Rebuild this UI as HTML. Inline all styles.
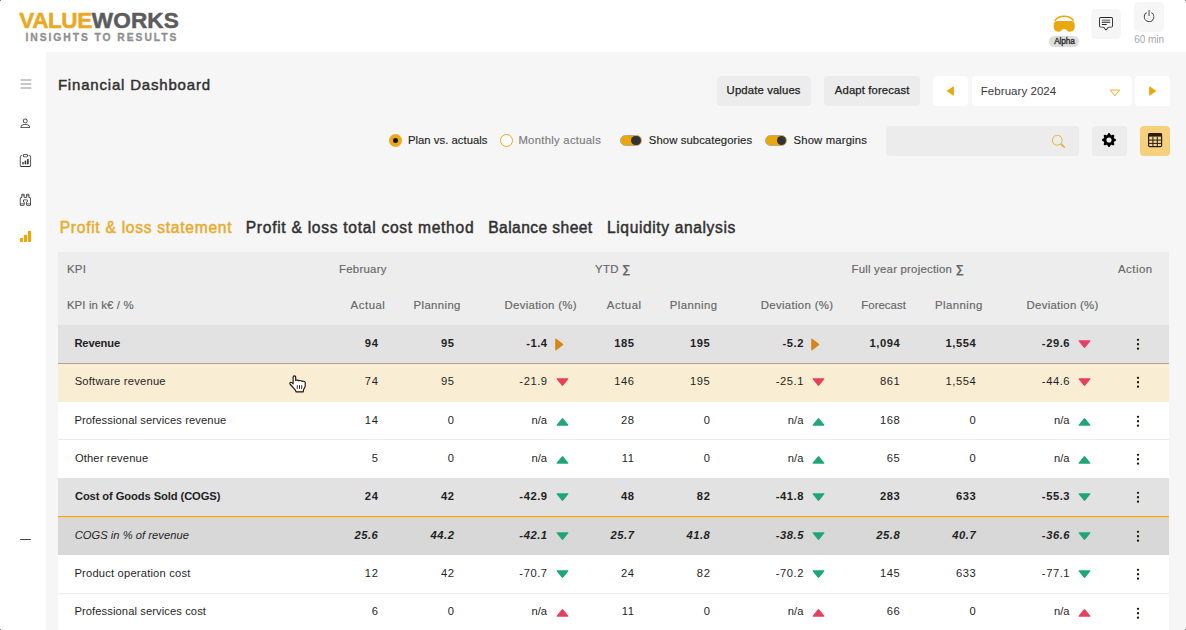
<!DOCTYPE html>
<html lang="en">
<head>
<meta charset="utf-8">
<title>Financial Dashboard</title>
<style>
*{box-sizing:border-box;margin:0;padding:0}
html,body{width:1186px;height:630px;overflow:hidden;background:#fff}
body{font-family:"Liberation Sans",sans-serif;color:#222;position:relative}
#app{position:absolute;left:0;top:0;width:1186px;height:630px;overflow:hidden;background:#fff}
#main{position:absolute;left:46px;top:52px;width:1140px;height:578px;background:#f6f6f6}
.abs{position:absolute;white-space:nowrap}
.ic{position:absolute;display:block;overflow:visible}
.row{position:absolute;left:58px;width:1111px}
.sep{position:absolute;left:58px;width:1111px;height:1px;background:#ebebeb}
.lb,.v,.h{position:absolute;white-space:nowrap;font-size:11.2px;line-height:20px;height:20px;color:#1f1f1f}
.v{letter-spacing:.55px}
.b{font-weight:700}
.it{font-style:italic}
.h{color:#666;font-size:11.4px;-webkit-text-stroke:.15px}
.bt{font-size:11.3px;line-height:20px;color:#222;-webkit-text-stroke:.25px #222}
.btn{position:absolute;border-radius:4px;background:#ececec;font-size:11.5px;color:#222;text-align:center;white-space:nowrap}
.ctl{font-size:11.3px;line-height:20px;color:#1f1f1f;-webkit-text-stroke:.15px}
.tog{width:21.4px;height:11.8px;border-radius:6px;background:#eaa60f;border:1px solid #b9a98a}
.tog i{position:absolute;right:-.3px;top:.1px;width:9.400px;height:9.400px;border-radius:50%;background:#333}
#logo1{letter-spacing:0.24px;transform:translateX(0.3px)}
#logo2{letter-spacing:1.95px;transform:translateX(-0.5px)}
#title{letter-spacing:0.81px;transform:translateX(-0.1px)}
#t1{letter-spacing:0.72px;transform:translateX(-0.3px)}
#t2{letter-spacing:0.72px;transform:translateX(-0.3px)}
#t3{letter-spacing:0.42px;transform:translateX(0.3px)}
#t4{letter-spacing:0.61px;transform:translateX(0.0px)}
#b1{letter-spacing:0.14px;transform:translateX(-0.4px)}
#b2{letter-spacing:0.13px;transform:translateX(0.3px)}
#date{letter-spacing:0.05px;transform:translateX(-0.2px)}
#c1{letter-spacing:0.03px;transform:translateX(-0.6px)}
#c2{letter-spacing:0.28px;transform:translateX(-0.9px)}
#c3{letter-spacing:0.09px;transform:translateX(-0.2px)}
#c4{letter-spacing:0.16px;transform:translateX(-0.5px)}
#alpha{letter-spacing:-0.13px;transform:translateX(0.5px)}
#min{letter-spacing:-0.02px;transform:translateX(0.1px)}
#h0{letter-spacing:0.33px;transform:translateX(-1.1px)}
#h1{letter-spacing:0.12px;transform:translateX(-1.1px)}
#h2{letter-spacing:0.26px;transform:translateX(-0.5px)}
#h3{letter-spacing:0.26px;transform:translateX(0.1px)}
#h4{letter-spacing:0.22px;transform:translateX(-0.5px)}
#h5{letter-spacing:0.49px;transform:translateX(0.0px)}
#h6{letter-spacing:0.52px;transform:translateX(1.4px)}
#h7{letter-spacing:0.36px;transform:translateX(0.8px)}
#h8{letter-spacing:0.30px;transform:translateX(0.8px)}
#h9{letter-spacing:0.54px;transform:translateX(0.7px)}
#h10{letter-spacing:0.43px;transform:translateX(1.6px)}
#h11{letter-spacing:0.33px;transform:translateX(1.4px)}
#h12{letter-spacing:0.04px;transform:translateX(-0.1px)}
#h13{letter-spacing:0.42px;transform:translateX(0.7px)}
#h14{letter-spacing:0.27px;transform:translateX(0.5px)}
#lb0{letter-spacing:-0.14px;transform:translateX(-0.6px)}
#lb1{letter-spacing:0.21px;transform:translateX(-0.3px)}
#lb2{letter-spacing:0.09px;transform:translateX(-0.6px)}
#lb3{letter-spacing:0.14px;transform:translateX(-0.1px)}
#lb4{letter-spacing:-0.10px;transform:translateX(-0.1px)}
#lb5{letter-spacing:0.02px;transform:translateX(-0.3px)}
#lb6{letter-spacing:0.19px;transform:translateX(-0.6px)}
#lb7{letter-spacing:0.09px;transform:translateX(-0.6px)}
#lg1{letter-spacing:-.5px}
#lg2{letter-spacing:.14px}
</style>
</head>
<body>
<div id="app">
<div id="main"></div>

<!-- logo -->
<div class="abs" id="logo1" style="left:19px;top:8.8px;font-size:22.6px;line-height:24px;font-weight:700;-webkit-text-stroke:.5px"><span id="lg1" style="display:inline-block;color:#eaa91f">VALUE</span><span id="lg2" style="display:inline-block;color:#5c5c5c">WORKS</span></div>
<div class="abs" id="logo2" style="left:26px;top:31.8px;font-size:10.3px;line-height:12px;font-weight:700;-webkit-text-stroke:.3px;color:#8f8f8f">INSIGHTS TO RESULTS</div>

<!-- title -->
<div class="abs" id="title" style="left:58px;top:73.5px;font-size:15px;line-height:22px;font-weight:400;color:#303030;-webkit-text-stroke:.45px #303030">Financial Dashboard</div>

<!-- buttons -->
<div class="btn" style="left:717px;top:76px;width:94px;height:30px"></div>
<div class="btn" style="left:824px;top:76px;width:96.300px;height:30px"></div>
<div class="abs bt" id="b1" style="left:727px;top:79.700px">Update values</div>
<div class="abs bt" id="b2" style="left:834.500px;top:79.700px">Adapt forecast</div>
<div class="btn" style="left:933px;top:76px;width:35px;height:30px;background:#fff"></div>
<div class="btn" style="left:972px;top:76px;width:160px;height:30px;background:#fff"></div>
<div class="btn" style="left:1135px;top:76px;width:35px;height:30px;background:#fff"></div>
<div class="abs" id="date" style="left:981px;top:81px;font-size:11.5px;line-height:20px;color:#3a3a3a">February 2024</div>


<!-- controls row -->
<div class="abs" style="left:389px;top:134px;width:13.4px;height:13.4px;border-radius:50%;background:#eaa81c"></div>
<div class="abs" style="left:393px;top:138.400px;width:4.700px;height:4.700px;border-radius:50%;background:#1c1408"></div>
<div class="abs ctl" id="c1" style="left:408.5px;top:129.5px">Plan vs. actuals</div>
<div class="abs" style="left:499.8px;top:134px;width:13.4px;height:13.4px;border-radius:50%;background:#fff;border:1.2px solid #eaa81c"></div>
<div class="abs ctl" id="c2" style="left:519.3px;top:129.5px;color:#7b7b7b">Monthly actuals</div>
<div class="abs tog" style="left:620.2px;top:134.6px"><i></i></div>
<div class="abs ctl" id="c3" style="left:649px;top:129.5px">Show subcategories</div>
<div class="abs tog" style="left:765.4px;top:134.6px"><i></i></div>
<div class="abs ctl" id="c4" style="left:794px;top:129.5px">Show margins</div>
<div class="btn" style="left:886px;top:126px;width:193px;height:30px"></div>
<div class="btn" style="left:1092px;top:126px;width:35px;height:30px"></div>
<div class="btn" style="left:1140px;top:126px;width:30px;height:30px;background:#f6d07c"></div>

<!-- tabs -->
<div class="abs tab" id="t1" style="left:60px;top:216px;font-size:15.600px;line-height:24px;font-weight:400;color:#e8ab2a;-webkit-text-stroke:.45px #e8ab2a">Profit &amp; loss statement</div>
<div class="abs tab" id="t2" style="left:246px;top:216px;font-size:15.600px;line-height:24px;font-weight:400;color:#303030;-webkit-text-stroke:.45px #303030">Profit &amp; loss total cost method</div>
<div class="abs tab" id="t3" style="left:488px;top:216px;font-size:15.600px;line-height:24px;font-weight:400;color:#303030;-webkit-text-stroke:.45px #303030">Balance sheet</div>
<div class="abs tab" id="t4" style="left:607px;top:216px;font-size:15.600px;line-height:24px;font-weight:400;color:#303030;-webkit-text-stroke:.45px #303030">Liquidity analysis</div>

<!-- table header -->
<div class="row" style="top:252px;height:73.2px;background:#ededed"></div>
<div class="h" id="h0" style="left:68px;top:259px">KPI</div>
<div class="h" id="h1" style="left:68px;top:295px">KPI in k€ / %</div>
<div class="h" id="h2" style="left:339.5px;top:259px">February</div>
<div class="h" id="h3" style="left:595px;top:259px">YTD <b>∑</b></div>
<div class="h" id="h4" style="left:852px;top:259px">Full year projection <b>∑</b></div>
<div class="h" id="h5" style="left:1118px;top:259px">Action</div>
<div class="h" id="h6" style="right:802px;top:295px">Actual</div>
<div class="h" id="h7" style="right:726px;top:295px">Planning</div>
<div class="h" id="h8" style="right:610px;top:295px">Deviation (%)</div>
<div class="h" id="h9" style="right:545px;top:295px">Actual</div>
<div class="h" id="h10" style="right:470px;top:295px">Planning</div>
<div class="h" id="h11" style="right:354px;top:295px">Deviation (%)</div>
<div class="h" id="h12" style="right:280px;top:295px">Forecast</div>
<div class="h" id="h13" style="right:204px;top:295px">Planning</div>
<div class="h" id="h14" style="right:88px;top:295px">Deviation (%)</div>

<div class="row" style="top:325.0px;height:38.6px;background:#e2e2e2"></div>
<div class="lb b" id="lb0" style="left:75px;top:332.9px">Revenue</div>
<div class="v b" style="right:807.6px;top:332.9px">94</div>
<div class="v b" style="right:731.5px;top:332.9px">95</div>
<div class="v b" style="right:638.4px;top:332.9px">-1.4</div>
<div class="v b" style="right:551.5px;top:332.9px">185</div>
<div class="v b" style="right:475.6px;top:332.9px">195</div>
<div class="v b" style="right:382.0px;top:332.9px">-5.2</div>
<div class="v b" style="right:285.8px;top:332.9px">1,094</div>
<div class="v b" style="right:209.8px;top:332.9px">1,554</div>
<div class="v b" style="right:115.9px;top:332.9px">-29.6</div>
<svg class="ic" style="left:553.8px;top:337.7px" width="10" height="13" viewBox="0 0 10 13"><path d="M1.200 1.300v10.400a.7.700 0 0 0 1.100.6L8.800 7.200a.8.800 0 0 0 0-1.400L2.300 .7a.7.700 0 0 0-1.100.6z" fill="#d5871b"/></svg>
<svg class="ic" style="left:810.2px;top:337.7px" width="10" height="13" viewBox="0 0 10 13"><path d="M1.200 1.300v10.400a.7.700 0 0 0 1.100.6L8.800 7.200a.8.800 0 0 0 0-1.400L2.300 .7a.7.700 0 0 0-1.100.6z" fill="#d5871b"/></svg>
<svg class="ic" style="left:1077.9px;top:338.7px" width="13" height="10" viewBox="0 0 13 10"><path d="M1.300 1.200h10.400a.7.700 0 0 1 .6 1.100L7.200 8.600a.8.800 0 0 1-1.400 0L.7 2.300a.7.700 0 0 1 .6-1.100z" fill="#e83e60"/></svg>
<svg class="ic" style="left:1136px;top:338.0px" width="4" height="13" viewBox="0 0 4 13"><circle cx="2" cy="1.800" r="1.150" fill="#1c1408"/><circle cx="2" cy="6.250" r="1.150" fill="#1c1408"/><circle cx="2" cy="10.700" r="1.150" fill="#1c1408"/></svg>
<div class="row" style="top:363.4px;height:38.6px;background:#f9eed4"></div>
<div class="lb" id="lb1" style="left:75px;top:371.2px">Software revenue</div>
<div class="v" style="right:807.6px;top:371.2px">74</div>
<div class="v" style="right:731.5px;top:371.2px">95</div>
<div class="v" style="right:638.4px;top:371.2px">-21.9</div>
<div class="v" style="right:551.5px;top:371.2px">146</div>
<div class="v" style="right:475.6px;top:371.2px">195</div>
<div class="v" style="right:382.0px;top:371.2px">-25.1</div>
<div class="v" style="right:285.8px;top:371.2px">861</div>
<div class="v" style="right:209.8px;top:371.2px">1,554</div>
<div class="v" style="right:115.9px;top:371.2px">-44.6</div>
<svg class="ic" style="left:556.0px;top:377.0px" width="13" height="10" viewBox="0 0 13 10"><path d="M1.300 1.200h10.400a.7.700 0 0 1 .6 1.100L7.200 8.600a.8.800 0 0 1-1.400 0L.7 2.300a.7.700 0 0 1 .6-1.100z" fill="#e83e60"/></svg>
<svg class="ic" style="left:812.0px;top:377.0px" width="13" height="10" viewBox="0 0 13 10"><path d="M1.300 1.200h10.400a.7.700 0 0 1 .6 1.100L7.200 8.600a.8.800 0 0 1-1.400 0L.7 2.300a.7.700 0 0 1 .6-1.100z" fill="#e83e60"/></svg>
<svg class="ic" style="left:1077.9px;top:377.0px" width="13" height="10" viewBox="0 0 13 10"><path d="M1.300 1.200h10.400a.7.700 0 0 1 .6 1.100L7.200 8.600a.8.800 0 0 1-1.400 0L.7 2.300a.7.700 0 0 1 .6-1.100z" fill="#e83e60"/></svg>
<svg class="ic" style="left:1136px;top:376.3px" width="4" height="13" viewBox="0 0 4 13"><circle cx="2" cy="1.800" r="1.150" fill="#1c1408"/><circle cx="2" cy="6.250" r="1.150" fill="#1c1408"/><circle cx="2" cy="10.700" r="1.150" fill="#1c1408"/></svg>
<div class="row" style="top:401.7px;height:38.6px;background:#ffffff"></div>
<div class="lb" id="lb2" style="left:75px;top:409.6px">Professional services revenue</div>
<div class="v" style="right:807.6px;top:409.6px">14</div>
<div class="v" style="right:731.5px;top:409.6px">0</div>
<div class="v" style="right:638.4px;top:409.6px;letter-spacing:.05px;margin-right:.5px">n/a</div>
<div class="v" style="right:551.5px;top:409.6px">28</div>
<div class="v" style="right:475.6px;top:409.6px">0</div>
<div class="v" style="right:382.0px;top:409.6px;letter-spacing:.05px;margin-right:.5px">n/a</div>
<div class="v" style="right:285.8px;top:409.6px">168</div>
<div class="v" style="right:209.8px;top:409.6px">0</div>
<div class="v" style="right:115.9px;top:409.6px;letter-spacing:.05px;margin-right:.5px">n/a</div>
<svg class="ic" style="left:556.0px;top:416.5px" width="13" height="10" viewBox="0 0 13 10"><path d="M1.300 8.800h10.400a.7.700 0 0 0 .6-1.100L7.200 1.400a.8.800 0 0 0-1.400 0L.7 7.700a.7.700 0 0 0 .6 1.100z" fill="#1ea678"/></svg>
<svg class="ic" style="left:812.0px;top:416.5px" width="13" height="10" viewBox="0 0 13 10"><path d="M1.300 8.800h10.400a.7.700 0 0 0 .6-1.100L7.200 1.400a.8.800 0 0 0-1.400 0L.7 7.700a.7.700 0 0 0 .6 1.100z" fill="#1ea678"/></svg>
<svg class="ic" style="left:1077.9px;top:416.5px" width="13" height="10" viewBox="0 0 13 10"><path d="M1.300 8.800h10.400a.7.700 0 0 0 .6-1.100L7.200 1.400a.8.800 0 0 0-1.400 0L.7 7.700a.7.700 0 0 0 .6 1.100z" fill="#1ea678"/></svg>
<svg class="ic" style="left:1136px;top:414.7px" width="4" height="13" viewBox="0 0 4 13"><circle cx="2" cy="1.800" r="1.150" fill="#1c1408"/><circle cx="2" cy="6.250" r="1.150" fill="#1c1408"/><circle cx="2" cy="10.700" r="1.150" fill="#1c1408"/></svg>
<div class="row" style="top:440.1px;height:38.6px;background:#ffffff"></div>
<div class="lb" id="lb3" style="left:75px;top:448.0px">Other revenue</div>
<div class="v" style="right:807.6px;top:448.0px">5</div>
<div class="v" style="right:731.5px;top:448.0px">0</div>
<div class="v" style="right:638.4px;top:448.0px;letter-spacing:.05px;margin-right:.5px">n/a</div>
<div class="v" style="right:551.5px;top:448.0px">11</div>
<div class="v" style="right:475.6px;top:448.0px">0</div>
<div class="v" style="right:382.0px;top:448.0px;letter-spacing:.05px;margin-right:.5px">n/a</div>
<div class="v" style="right:285.8px;top:448.0px">65</div>
<div class="v" style="right:209.8px;top:448.0px">0</div>
<div class="v" style="right:115.9px;top:448.0px;letter-spacing:.05px;margin-right:.5px">n/a</div>
<svg class="ic" style="left:556.0px;top:454.9px" width="13" height="10" viewBox="0 0 13 10"><path d="M1.300 8.800h10.400a.7.700 0 0 0 .6-1.100L7.200 1.400a.8.800 0 0 0-1.400 0L.7 7.700a.7.700 0 0 0 .6 1.100z" fill="#1ea678"/></svg>
<svg class="ic" style="left:812.0px;top:454.9px" width="13" height="10" viewBox="0 0 13 10"><path d="M1.300 8.800h10.400a.7.700 0 0 0 .6-1.100L7.200 1.400a.8.800 0 0 0-1.400 0L.7 7.700a.7.700 0 0 0 .6 1.100z" fill="#1ea678"/></svg>
<svg class="ic" style="left:1077.9px;top:454.9px" width="13" height="10" viewBox="0 0 13 10"><path d="M1.300 8.800h10.400a.7.700 0 0 0 .6-1.100L7.200 1.400a.8.800 0 0 0-1.400 0L.7 7.700a.7.700 0 0 0 .6 1.100z" fill="#1ea678"/></svg>
<svg class="ic" style="left:1136px;top:453.1px" width="4" height="13" viewBox="0 0 4 13"><circle cx="2" cy="1.800" r="1.150" fill="#1c1408"/><circle cx="2" cy="6.250" r="1.150" fill="#1c1408"/><circle cx="2" cy="10.700" r="1.150" fill="#1c1408"/></svg>
<div class="row" style="top:478.4px;height:38.6px;background:#e2e2e2"></div>
<div class="lb b" id="lb4" style="left:75px;top:486.3px">Cost of Goods Sold (COGS)</div>
<div class="v b" style="right:807.6px;top:486.3px">24</div>
<div class="v b" style="right:731.5px;top:486.3px">42</div>
<div class="v b" style="right:638.4px;top:486.3px">-42.9</div>
<div class="v b" style="right:551.5px;top:486.3px">48</div>
<div class="v b" style="right:475.6px;top:486.3px">82</div>
<div class="v b" style="right:382.0px;top:486.3px">-41.8</div>
<div class="v b" style="right:285.8px;top:486.3px">283</div>
<div class="v b" style="right:209.8px;top:486.3px">633</div>
<div class="v b" style="right:115.9px;top:486.3px">-55.3</div>
<svg class="ic" style="left:556.0px;top:492.1px" width="13" height="10" viewBox="0 0 13 10"><path d="M1.300 1.200h10.400a.7.700 0 0 1 .6 1.100L7.200 8.600a.8.800 0 0 1-1.400 0L.7 2.300a.7.700 0 0 1 .6-1.100z" fill="#1ea678"/></svg>
<svg class="ic" style="left:812.0px;top:492.1px" width="13" height="10" viewBox="0 0 13 10"><path d="M1.300 1.200h10.400a.7.700 0 0 1 .6 1.100L7.200 8.600a.8.800 0 0 1-1.400 0L.7 2.300a.7.700 0 0 1 .6-1.100z" fill="#1ea678"/></svg>
<svg class="ic" style="left:1077.9px;top:492.1px" width="13" height="10" viewBox="0 0 13 10"><path d="M1.300 1.200h10.400a.7.700 0 0 1 .6 1.100L7.200 8.600a.8.800 0 0 1-1.400 0L.7 2.300a.7.700 0 0 1 .6-1.100z" fill="#1ea678"/></svg>
<svg class="ic" style="left:1136px;top:491.4px" width="4" height="13" viewBox="0 0 4 13"><circle cx="2" cy="1.800" r="1.150" fill="#1c1408"/><circle cx="2" cy="6.250" r="1.150" fill="#1c1408"/><circle cx="2" cy="10.700" r="1.150" fill="#1c1408"/></svg>
<div class="row" style="top:516.8px;height:38.6px;background:#d8d8d8"></div>
<div class="lb it" id="lb5" style="left:75px;top:524.7px">COGS in % of revenue</div>
<div class="v b it" style="right:807.6px;top:524.7px">25.6</div>
<div class="v b it" style="right:731.5px;top:524.7px">44.2</div>
<div class="v b it" style="right:638.4px;top:524.7px">-42.1</div>
<div class="v b it" style="right:551.5px;top:524.7px">25.7</div>
<div class="v b it" style="right:475.6px;top:524.7px">41.8</div>
<div class="v b it" style="right:382.0px;top:524.7px">-38.5</div>
<div class="v b it" style="right:285.8px;top:524.7px">25.8</div>
<div class="v b it" style="right:209.8px;top:524.7px">40.7</div>
<div class="v b it" style="right:115.9px;top:524.7px">-36.6</div>
<svg class="ic" style="left:556.0px;top:530.5px" width="13" height="10" viewBox="0 0 13 10"><path d="M1.300 1.200h10.400a.7.700 0 0 1 .6 1.100L7.200 8.600a.8.800 0 0 1-1.400 0L.7 2.300a.7.700 0 0 1 .6-1.100z" fill="#1ea678"/></svg>
<svg class="ic" style="left:812.0px;top:530.5px" width="13" height="10" viewBox="0 0 13 10"><path d="M1.300 1.200h10.400a.7.700 0 0 1 .6 1.100L7.200 8.600a.8.800 0 0 1-1.400 0L.7 2.300a.7.700 0 0 1 .6-1.100z" fill="#1ea678"/></svg>
<svg class="ic" style="left:1077.9px;top:530.5px" width="13" height="10" viewBox="0 0 13 10"><path d="M1.300 1.200h10.400a.7.700 0 0 1 .6 1.100L7.200 8.600a.8.800 0 0 1-1.400 0L.7 2.300a.7.700 0 0 1 .6-1.100z" fill="#1ea678"/></svg>
<svg class="ic" style="left:1136px;top:529.8px" width="4" height="13" viewBox="0 0 4 13"><circle cx="2" cy="1.800" r="1.150" fill="#1c1408"/><circle cx="2" cy="6.250" r="1.150" fill="#1c1408"/><circle cx="2" cy="10.700" r="1.150" fill="#1c1408"/></svg>
<div class="row" style="top:555.2px;height:38.6px;background:#ffffff"></div>
<div class="lb" id="lb6" style="left:75px;top:563.0px">Product operation cost</div>
<div class="v" style="right:807.6px;top:563.0px">12</div>
<div class="v" style="right:731.5px;top:563.0px">42</div>
<div class="v" style="right:638.4px;top:563.0px">-70.7</div>
<div class="v" style="right:551.5px;top:563.0px">24</div>
<div class="v" style="right:475.6px;top:563.0px">82</div>
<div class="v" style="right:382.0px;top:563.0px">-70.2</div>
<div class="v" style="right:285.8px;top:563.0px">145</div>
<div class="v" style="right:209.8px;top:563.0px">633</div>
<div class="v" style="right:115.9px;top:563.0px">-77.1</div>
<svg class="ic" style="left:556.0px;top:568.8px" width="13" height="10" viewBox="0 0 13 10"><path d="M1.300 1.200h10.400a.7.700 0 0 1 .6 1.100L7.200 8.600a.8.800 0 0 1-1.400 0L.7 2.300a.7.700 0 0 1 .6-1.100z" fill="#1ea678"/></svg>
<svg class="ic" style="left:812.0px;top:568.8px" width="13" height="10" viewBox="0 0 13 10"><path d="M1.300 1.200h10.400a.7.700 0 0 1 .6 1.100L7.200 8.600a.8.800 0 0 1-1.400 0L.7 2.300a.7.700 0 0 1 .6-1.100z" fill="#1ea678"/></svg>
<svg class="ic" style="left:1077.9px;top:568.8px" width="13" height="10" viewBox="0 0 13 10"><path d="M1.300 1.200h10.400a.7.700 0 0 1 .6 1.100L7.200 8.600a.8.800 0 0 1-1.400 0L.7 2.300a.7.700 0 0 1 .6-1.100z" fill="#1ea678"/></svg>
<svg class="ic" style="left:1136px;top:568.1px" width="4" height="13" viewBox="0 0 4 13"><circle cx="2" cy="1.800" r="1.150" fill="#1c1408"/><circle cx="2" cy="6.250" r="1.150" fill="#1c1408"/><circle cx="2" cy="10.700" r="1.150" fill="#1c1408"/></svg>
<div class="row" style="top:593.5px;height:38.6px;background:#ffffff"></div>
<div class="lb" id="lb7" style="left:75px;top:601.4px">Professional services cost</div>
<div class="v" style="right:807.6px;top:601.4px">6</div>
<div class="v" style="right:731.5px;top:601.4px">0</div>
<div class="v" style="right:638.4px;top:601.4px;letter-spacing:.05px;margin-right:.5px">n/a</div>
<div class="v" style="right:551.5px;top:601.4px">11</div>
<div class="v" style="right:475.6px;top:601.4px">0</div>
<div class="v" style="right:382.0px;top:601.4px;letter-spacing:.05px;margin-right:.5px">n/a</div>
<div class="v" style="right:285.8px;top:601.4px">66</div>
<div class="v" style="right:209.8px;top:601.4px">0</div>
<div class="v" style="right:115.9px;top:601.4px;letter-spacing:.05px;margin-right:.5px">n/a</div>
<svg class="ic" style="left:556.0px;top:608.3px" width="13" height="10" viewBox="0 0 13 10"><path d="M1.300 8.800h10.400a.7.700 0 0 0 .6-1.100L7.200 1.400a.8.800 0 0 0-1.400 0L.7 7.700a.7.700 0 0 0 .6 1.100z" fill="#e83e60"/></svg>
<svg class="ic" style="left:812.0px;top:608.3px" width="13" height="10" viewBox="0 0 13 10"><path d="M1.300 8.800h10.400a.7.700 0 0 0 .6-1.100L7.200 1.400a.8.800 0 0 0-1.400 0L.7 7.700a.7.700 0 0 0 .6 1.100z" fill="#e83e60"/></svg>
<svg class="ic" style="left:1077.9px;top:608.3px" width="13" height="10" viewBox="0 0 13 10"><path d="M1.300 8.800h10.400a.7.700 0 0 0 .6-1.100L7.200 1.400a.8.800 0 0 0-1.400 0L.7 7.700a.7.700 0 0 0 .6 1.100z" fill="#e83e60"/></svg>
<svg class="ic" style="left:1136px;top:606.5px" width="4" height="13" viewBox="0 0 4 13"><circle cx="2" cy="1.800" r="1.150" fill="#1c1408"/><circle cx="2" cy="6.250" r="1.150" fill="#1c1408"/><circle cx="2" cy="10.700" r="1.150" fill="#1c1408"/></svg>
<div class="sep" style="top:439px"></div>
<div class="sep" style="top:593px"></div>
<div class="abs" style="left:58px;top:363px;width:1111px;height:1px;background:#aaa59c"></div>
<div class="abs" style="left:58px;top:516px;width:1111px;height:1px;background:#e3ab2c"></div>
<div class="abs" style="left:58px;top:517px;width:1111px;height:1px;background:#f8d26a"></div>

<!-- sidebar icons -->
<svg class="ic" style="left:18px;top:76px" width="16" height="16" viewBox="0 0 16 16" fill="#8f8f8f"><path fill-rule="evenodd" d="M2.500 12a.5.5 0 0 1 .5-.5h10a.5.5 0 0 1 0 1H3a.5.5 0 0 1-.5-.5zm0-4a.5.5 0 0 1 .5-.5h10a.5.5 0 0 1 0 1H3a.5.5 0 0 1-.5-.5zm0-4a.5.5 0 0 1 .5-.5h10a.5.5 0 0 1 0 1H3a.5.5 0 0 1-.5-.5z"/></svg>
<svg class="ic" style="left:19.1px;top:116.8px" width="12.5" height="12.5" viewBox="0 0 16 16" fill="#333"><path d="M8 8a3 3 0 1 0 0-6 3 3 0 0 0 0 6Zm2-3a2 2 0 1 1-4 0 2 2 0 0 1 4 0Zm4 8c0 1-1 1-1 1H3s-1 0-1-1 1-4 6-4 6 3 6 4Zm-1-.004c-.001-.246-.154-.986-.832-1.664C11.516 10.680 10.289 10 8 10c-2.290 0-3.516.680-4.168 1.332-.678.678-.830 1.418-.832 1.664h10Z"/></svg>
<svg class="ic" style="left:19px;top:154px" width="12.9" height="12.9" viewBox="0 0 16 16" fill="#333"><path d="M4 11a1 1 0 1 1 2 0v1a1 1 0 1 1-2 0v-1zm6-4a1 1 0 1 1 2 0v5a1 1 0 1 1-2 0V7zM7 9a1 1 0 0 1 2 0v3a1 1 0 1 1-2 0V9z"/><path d="M4 1.500H3a2 2 0 0 0-2 2V14a2 2 0 0 0 2 2h10a2 2 0 0 0 2-2V3.500a2 2 0 0 0-2-2h-1v1h1a1 1 0 0 1 1 1V14a1 1 0 0 1-1 1H3a1 1 0 0 1-1-1V3.500a1 1 0 0 1 1-1h1v-1z"/><path d="M9.500 1a.5.5 0 0 1 .5.5v1a.5.5 0 0 1-.5.5h-3a.5.5 0 0 1-.5-.5v-1a.5.5 0 0 1 .5-.5h3zm-3-1A1.500 1.500 0 0 0 5 1.500v1A1.500 1.500 0 0 0 6.500 4h3A1.500 1.500 0 0 0 11 2.500v-1A1.500 1.500 0 0 0 9.500 0h-3z"/></svg>
<svg class="ic" style="left:18.8px;top:192.8px" width="12.8" height="12.8" viewBox="0 0 16 16" fill="#333"><path d="M3 2.500A1.500 1.500 0 0 1 4.500 1h1A1.500 1.500 0 0 1 7 2.500V5h2V2.500A1.500 1.500 0 0 1 10.500 1h1A1.500 1.500 0 0 1 13 2.500v2.382a.5.5 0 0 0 .276.447l.895.447A1.500 1.500 0 0 1 15 7.118V14.500a1.500 1.500 0 0 1-1.500 1.500h-3A1.500 1.500 0 0 1 9 14.500v-3a.5.5 0 0 1 .146-.354l.854-.853V9.500a.5.5 0 0 0-.5-.5h-3a.5.5 0 0 0-.5.5v.793l.854.853A.5.5 0 0 1 7 11.500v3A1.500 1.500 0 0 1 5.500 16h-3A1.500 1.500 0 0 1 1 14.500V7.118a1.500 1.500 0 0 1 .830-1.342l.894-.447A.5.5 0 0 0 3 4.882V2.500zM4.500 2a.5.5 0 0 0-.5.5V3h2v-.5a.5.5 0 0 0-.5-.5h-1zM6 4H4v.882a1.500 1.500 0 0 1-.830 1.342l-.894.447A.5.5 0 0 0 2 7.118V13h4v-1.293l-.854-.853A.5.5 0 0 1 5 10.500v-1A1.500 1.500 0 0 1 6.500 8h3A1.500 1.500 0 0 1 11 9.500v1a.5.5 0 0 1-.146.354l-.854.853V13h4V7.118a.5.5 0 0 0-.276-.447l-.895-.447A1.500 1.500 0 0 1 12 4.882V4h-2v1.500a.5.5 0 0 1-.5.5h-3a.5.5 0 0 1-.5-.5V4zm4-1h2v-.5a.5.5 0 0 0-.5-.5h-1a.5.5 0 0 0-.5.5V3zm4 11h-4v.5a.5.5 0 0 0 .5.5h3a.5.5 0 0 0 .5-.5V14zm-8 0H2v.5a.5.5 0 0 0 .5.5h3a.5.5 0 0 0 .5-.5V14z"/></svg>
<svg class="ic" style="left:19.1px;top:230px" width="12.9" height="12.9" viewBox="0 0 16 16" fill="#eaa80f"><path d="M1 11a1 1 0 0 1 1-1h2a1 1 0 0 1 1 1v3a1 1 0 0 1-1 1H2a1 1 0 0 1-1-1v-3zm5-4a1 1 0 0 1 1-1h2a1 1 0 0 1 1 1v7a1 1 0 0 1-1 1H7a1 1 0 0 1-1-1V7zm5-5a1 1 0 0 1 1-1h2a1 1 0 0 1 1 1v12a1 1 0 0 1-1 1h-2a1 1 0 0 1-1-1V2z"/></svg>
<div class="abs" style="left:19.5px;top:538.9px;width:11.8px;height:1.1px;background:#444;border-radius:1px"></div>

<!-- top right -->
<svg class="ic" style="left:1052px;top:14px" width="24" height="19" viewBox="0 0 24 19"><path d="M5.500 7H18.900a3.800 3.800 0 0 1 3.800 3.800V13c0 2.600-2 4.700-4.600 4.700c-1.600 0-2.600-.6-3.400-1.500c-.6-.7-1.400-1.200-2.500-1.200s-1.900.5-2.500 1.200c-.8.900-1.800 1.500-3.400 1.500c-2.600 0-4.600-2.100-4.600-4.700V10.800A3.800 3.800 0 0 1 5.500 7z" fill="#eaa80f"/><path d="M3.200 6.300C5.200 3.300 8.500 2.200 12.200 2.200S19.200 3.300 21.200 6.300" fill="none" stroke="#eaa80f" stroke-width="1.600" stroke-linecap="round"/></svg>
<div class="abs" style="left:1049px;top:36px;width:30px;height:11px;border-radius:5.5px;background:#dedede"></div>
<div class="abs" id="alpha" style="left:1049px;top:36px;width:30px;text-align:center;font-size:8.300px;line-height:11px;font-weight:400;-webkit-text-stroke:.35px;color:#2e2e2e">Alpha</div>
<div class="abs" style="left:1091.2px;top:9px;width:29.6px;height:30px;border-radius:5px;background:#f6f6f6"></div>
<svg class="ic" style="left:1099.1px;top:17px" width="14" height="14" viewBox="0 0 16 16" fill="#222"><path d="M14 1a1 1 0 0 1 1 1v8a1 1 0 0 1-1 1h-2.500a2 2 0 0 0-1.600.8L8 14.333 6.100 11.800a2 2 0 0 0-1.600-.8H2a1 1 0 0 1-1-1V2a1 1 0 0 1 1-1h12zM2 0a2 2 0 0 0-2 2v8a2 2 0 0 0 2 2h2.500a1 1 0 0 1 .8.4l1.900 2.533a1 1 0 0 0 1.600 0l1.900-2.533a1 1 0 0 1 .8-.4H14a2 2 0 0 0 2-2V2a2 2 0 0 0-2-2H2z"/><path d="M3 3.500a.5.5 0 0 1 .5-.5h9a.5.5 0 0 1 0 1h-9a.5.5 0 0 1-.5-.5zM3 6a.5.5 0 0 1 .5-.5h9a.5.5 0 0 1 0 1h-9A.5.5 0 0 1 3 6zm0 2.500a.5.5 0 0 1 .5-.5h5a.5.5 0 0 1 0 1h-5a.5.5 0 0 1-.5-.5z"/></svg>
<div class="abs" style="left:1134px;top:2px;width:29.8px;height:29.8px;border-radius:5px;background:#f6f6f6"></div>
<svg class="ic" style="left:1141.9px;top:9px" width="14.1" height="14.1" viewBox="0 0 16 16" fill="#333"><path d="M7.500 1v7h1V1h-1z"/><path d="M3 8.812a4.999 4.999 0 0 1 2.578-4.375l-.485-.874A6 6 0 1 0 11 3.616l-.501.865A5 5 0 1 1 3 8.812z"/></svg>
<div class="abs" id="min" style="left:1134px;top:32.5px;width:30px;text-align:center;font-size:10px;line-height:14px;color:#a8a8a8">60 min</div>

<!-- date nav icons -->
<svg class="ic" style="left:945.800px;top:85.900px" width="9" height="10" viewBox="0 0 9 11" preserveAspectRatio="none"><path d="M7.900 .9v9.200a.5.5 0 0 1-.8.400L.9 5.900a.5.5 0 0 1 0-.8L7.100 .5a.5.500 0 0 1 .8.400z" fill="#eaa80f"/></svg>
<svg class="ic" style="left:1147.900px;top:85.900px" width="9" height="10" viewBox="0 0 9 11" preserveAspectRatio="none"><path d="M1.100 .9v9.200a.5.5 0 0 0 .8.400l6.200-4.600a.5.5 0 0 0 0-.8L1.900 .5a.5.500 0 0 0-.8.400z" fill="#eaa80f"/></svg>
<svg class="ic" style="left:1109.200px;top:88.600px" width="12" height="8" viewBox="0 0 12 8"><path d="M1 1h9.700L5.850 6.900z" fill="#fff8e6" stroke="#e9b44c" stroke-width="1" stroke-linejoin="round"/></svg>

<!-- search / gear / table icons -->
<svg class="ic" style="left:1051.600px;top:135px" width="13" height="13" viewBox="0 0 16 16" fill="#ecae3a"><path d="M11.742 10.344a6.500 6.500 0 1 0-1.397 1.398h-.001c.03.040.062.078.098.115l3.850 3.850a1 1 0 0 0 1.415-1.414l-3.850-3.850a1.007 1.007 0 0 0-.115-.1zM12 6.500a5.500 5.500 0 1 1-11 0 5.500 5.500 0 0 1 11 0z"/></svg>
<svg class="ic" style="left:1102px;top:133px" width="14" height="14" viewBox="0 0 16 16" fill="#000"><path d="M9.405 1.050c-.413-1.400-2.397-1.400-2.810 0l-.1.340a1.464 1.464 0 0 1-2.105.872l-.310-.170c-1.283-.698-2.686.705-1.987 1.987l.169.311c.446.820.023 1.841-.872 2.105l-.340.100c-1.400.413-1.400 2.397 0 2.810l.340.100a1.464 1.464 0 0 1 .872 2.105l-.170.310c-.698 1.283.705 2.686 1.987 1.987l.311-.169a1.464 1.464 0 0 1 2.105.872l.100.340c.413 1.400 2.397 1.400 2.810 0l.100-.340a1.464 1.464 0 0 1 2.105-.872l.310.170c1.283.698 2.686-.705 1.987-1.987l-.169-.311a1.464 1.464 0 0 1 .872-2.105l.340-.100c1.400-.413 1.400-2.397 0-2.810l-.340-.100a1.464 1.464 0 0 1-.872-2.105l.170-.310c.698-1.283-.705-2.686-1.987-1.987l-.311.169a1.464 1.464 0 0 1-2.105-.872l-.100-.340zM8 10.930a2.929 2.929 0 1 1 0-5.860 2.929 2.929 0 0 1 0 5.858z"/></svg>
<svg class="ic" style="left:1148px;top:133px" width="14.200" height="14.200" viewBox="0 0 14.200 14.200"><rect x=".6" y=".6" width="13" height="13" rx="1.200" fill="#f3d58f" stroke="#2a1c08" stroke-width="1.200"/><rect x=".6" y=".6" width="13" height="3" fill="#2a1c08"/><path d="M4.900 3.600v10M9.300 3.600v10M.6 7.100h13M.6 10.400h13" stroke="#2a1c08" stroke-width="1" fill="none"/></svg>

<!-- mouse cursor -->
<svg class="ic" style="left:288px;top:374px" width="20" height="20" viewBox="0 0 20 20"><path d="M5.100 3.300C5.100 2.400 5.600 1.900 6.400 1.900S7.700 2.400 7.700 3.300V6.600C8 6 10.400 5.900 10.800 6.900C11.200 6.300 13.500 6.400 13.900 7.400C14.400 6.900 16.700 7.100 17.200 8.400V12C17.200 13.600 15.800 14.600 15.500 15.800L15.200 17.800H8C7.900 17 7.600 16.400 7 15.700L2.400 10.500C1.600 9.700 1.700 8.600 2.600 8.300C3.400 8.100 4 8.600 5.100 9.900z" fill="#fff" stroke="#1a1208" stroke-width="1.150" stroke-linejoin="round"/><path d="M9.300 11.200v3.700M11.500 11.200v3.700M13.700 11.200v3.700" stroke="#1a1208" stroke-width=".9" fill="none"/></svg>
<div class="abs" style="left:0;top:0;width:1px;height:1px;background:#777"></div>
<div class="abs" style="right:0;top:0;width:1px;height:1px;background:#777"></div>
<div class="abs" style="left:0;bottom:0;width:1px;height:1px;background:#777"></div>
<div class="abs" style="right:0;bottom:0;width:1px;height:1px;background:#777"></div>
</div>
</body>
</html>
